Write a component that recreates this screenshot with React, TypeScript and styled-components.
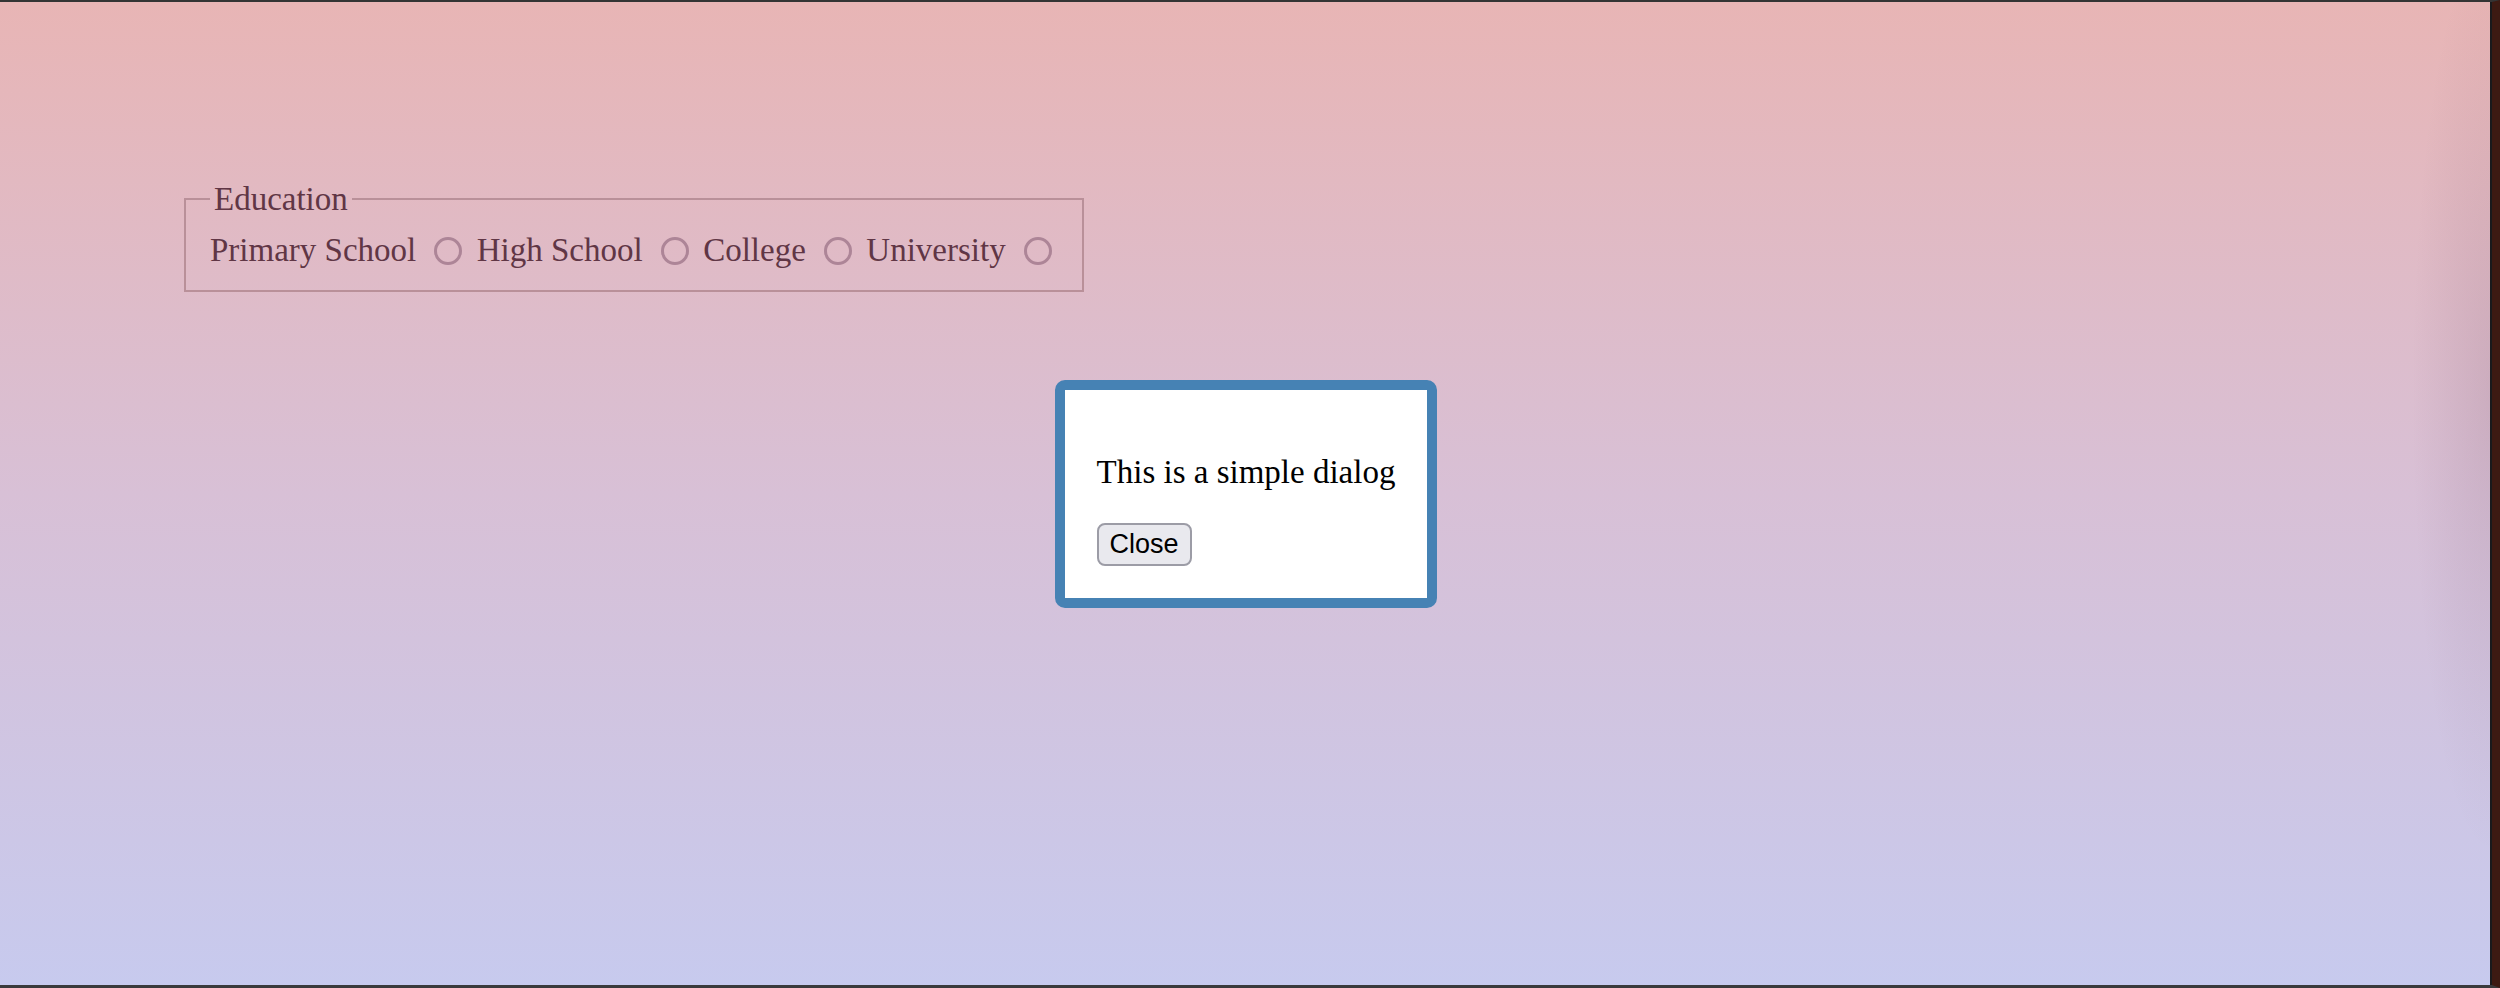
import React, { FC } from "react";
import styled, { createGlobalStyle } from "styled-components";

const GlobalStyle = createGlobalStyle`
  html,
  body {
    margin: 0;
    padding: 0;
    height: 100%;
  }
  body {
    font-family: "Liberation Serif", "Times New Roman", serif;
    background: #2e2e2e;
  }
`;

const Page = styled.main`
  position: relative;
  box-sizing: border-box;
  height: 988px;
  width: 100%;
  padding: 178px 0 0 184px;
  border-top: 2px solid #343434;
  border-bottom: 3px solid #3a3a3c;
  border-right: 8px solid #3d1a12;
  box-shadow: inset -2px 0 0 #1a1a1c;
  background:
    radial-gradient(
      ellipse 80px 460px at 100% 40%,
      rgba(90, 50, 70, 0.12),
      rgba(90, 50, 70, 0)
    ),
    linear-gradient(to bottom, #e8b5b5 0%, #d8c0d6 50%, #c7caee 100%);
`;

const Fieldset = styled.fieldset`
  display: inline-block;
  margin: 0;
  padding: 13px 24px 21px 24px;
  border: 2px solid #b99099;
  color: #603645;
  font-size: 33px;
  line-height: 38px;
`;

const Legend = styled.legend`
  padding: 0 4px;
  font-size: 33px;
  line-height: 38px;
  color: #603645;
`;

const Choice = styled.label`
  white-space: nowrap;
`;

const Radio = styled.input.attrs({ type: "radio" })`
  appearance: none;
  box-sizing: border-box;
  width: 28px;
  height: 28px;
  margin: 0 6px 0 10px;
  border: 3px solid #ad8597;
  border-radius: 50%;
  background: transparent;
  vertical-align: -4px;
  cursor: pointer;
`;

const DialogLayer = styled.div`
  position: absolute;
  inset: 0;
  display: flex;
  align-items: center;
  justify-content: center;
  pointer-events: none;
`;

const Dialog = styled.div`
  pointer-events: auto;
  background: #ffffff;
  border: 10px solid #4682b4;
  border-radius: 10px;
  padding: 32px;
  color: #000000;
`;

const Message = styled.p`
  margin: 32px 0;
  font-size: 33px;
  line-height: 37px;
  white-space: nowrap;
`;

const CloseButton = styled.button`
  display: block;
  box-sizing: border-box;
  height: 43px;
  padding: 0 11px;
  border: 2px solid #9c9ca6;
  border-radius: 8px;
  background: #e9e9ee;
  color: #000000;
  font-family: "Liberation Sans", Arial, sans-serif;
  font-size: 27px;
  cursor: pointer;
`;

const levels = ["Primary School", "High School", "College", "University"];

const App: FC = () => {
  return (
    <>
      <GlobalStyle />
      <Page>
        <Fieldset>
          <Legend>Education</Legend>
          {levels.map((level, i) => (
            <React.Fragment key={level}>
              {i > 0 && " "}
              <Choice>
                {level} <Radio name="education" value={level} />
              </Choice>
            </React.Fragment>
          ))}
        </Fieldset>
        <DialogLayer>
          <Dialog role="dialog">
            <Message>This is a simple dialog</Message>
            <CloseButton type="button">Close</CloseButton>
          </Dialog>
        </DialogLayer>
      </Page>
    </>
  );
};

export default App;
